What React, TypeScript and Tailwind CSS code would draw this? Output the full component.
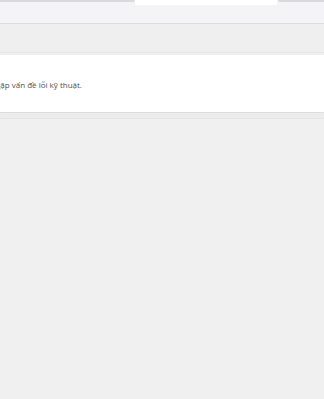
export default function App() {
  return (
    <div className="w-[324px] h-[399px] overflow-hidden bg-[#f0f0f0] font-['Open_Sans',sans-serif]">
      {/* tab strip */}
      <div className="h-6 bg-[#f4f4f6] flex items-start border-b border-[#dddddd]">
        <div className="w-[135px] h-[2px] bg-[#d9d9de] rounded-br" />
        <div className="w-[142px] h-[5px] bg-white" />
        <div className="flex-1 h-[2px] bg-[#d9d9de] rounded-bl ml-[1px]" />
      </div>
      {/* toolbar */}
      <div className="h-[29px] bg-[#efefef] border-b border-[#e6e6e6]" />
      {/* message card */}
      <div className="mt-[2px] h-[57px] bg-white shadow-[0_1px_2px_rgba(0,0,0,0.12)] flex items-center">
        <p className="ml-[-4px] text-[8px] leading-[12px] text-[#505050] mt-[3px]">
          gặp vấn đề lỗi kỹ thuật.
        </p>
      </div>
      <div className="mt-[1px] h-[6px] bg-[#ececec] border-b border-[#e4e4e4]" />
    </div>
  );
}
